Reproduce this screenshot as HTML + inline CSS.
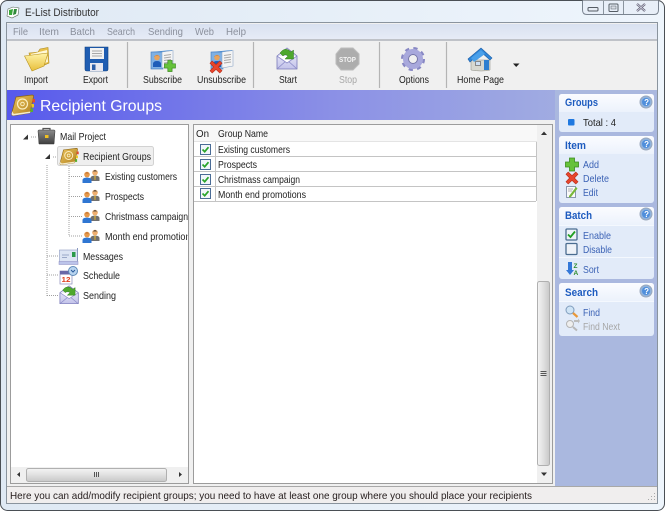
<!DOCTYPE html>
<html><head><meta charset="utf-8"><title>E-List Distributor</title>
<style>
html,body{margin:0;padding:0;width:665px;height:511px;overflow:hidden;background:#fff}
svg{display:block}
text{font-family:"Liberation Sans",sans-serif;font-size:10.5px;fill:#222}
.m{fill:#8b909c}
.b{fill:#3b62b5}
.h{font-weight:bold;font-size:11px;fill:#1d5bbf}
.g{fill:#a6a6a6}
</style></head><body>
<svg width="665" height="511" viewBox="0 0 665 511" xmlns="http://www.w3.org/2000/svg">
<defs>
<linearGradient id="glass" x1="0" y1="0" x2="1" y2="0"><stop offset="0" stop-color="#dfe9f4"/><stop offset="1" stop-color="#eef5fc"/></linearGradient>
<linearGradient id="menu" x1="0" y1="0" x2="0" y2="1"><stop offset="0" stop-color="#d9e1f0"/><stop offset="1" stop-color="#e6ebf6"/></linearGradient>
<linearGradient id="banner" x1="0" y1="0" x2="1" y2="0"><stop offset="0" stop-color="#5759ec"/><stop offset=".5" stop-color="#8b90e6"/><stop offset="1" stop-color="#aab8df"/></linearGradient>
<linearGradient id="ph" x1="0" y1="0" x2="0" y2="1"><stop offset="0" stop-color="#fbfcff"/><stop offset="1" stop-color="#ecf2fc"/></linearGradient>
<linearGradient id="sbv" x1="0" y1="0" x2="1" y2="0"><stop offset="0" stop-color="#f4f4f4"/><stop offset=".5" stop-color="#e0e0e0"/><stop offset="1" stop-color="#c8c8c8"/></linearGradient>
<linearGradient id="sbh" x1="0" y1="0" x2="0" y2="1"><stop offset="0" stop-color="#f4f4f4"/><stop offset=".5" stop-color="#e0e0e0"/><stop offset="1" stop-color="#c8c8c8"/></linearGradient>
<linearGradient id="fold" x1="0" y1="0" x2="0" y2="1"><stop offset="0" stop-color="#fff3a8"/><stop offset="1" stop-color="#e8bf3a"/></linearGradient>
<linearGradient id="book" x1="0" y1="0" x2="1" y2="1"><stop offset="0" stop-color="#ecc45c"/><stop offset="1" stop-color="#b08020"/></linearGradient>
<linearGradient id="env" x1="0" y1="0" x2="0" y2="1"><stop offset="0" stop-color="#f4f4fc"/><stop offset="1" stop-color="#c2c2ea"/></linearGradient>
<linearGradient id="brief" x1="0" y1="0" x2="0" y2="1"><stop offset="0" stop-color="#8c8c8c"/><stop offset="1" stop-color="#3f3f3f"/></linearGradient>

<g id="person1"><circle cx="5" cy="3.600" r="2.800" fill="#e89a4a"/><path d="M2.200 3.200Q5 -.4 7.800 3.200L7 2.400H3Z" fill="#b0602a"/><path d="M.5 12V8.800Q1 6.600 5 6.600T9.500 8.800V12Z" fill="#2f76d2"/></g>
<g id="person2"><circle cx="5" cy="3.600" r="2.800" fill="#f0b070"/><path d="M2 3.500Q5 -1 8 3.500L7 2.400H3Z" fill="#333"/><path d="M.5 12V8.800Q1 6.600 5 6.600T9.500 8.800V12Z" fill="#707070"/><path d="M4.300 6.800H5.700L5.400 11H4.600Z" fill="#e0b030"/></g>
<g id="people"><use href="#person2" x="8" y="2"/><use href="#person1" x="0" y="4"/></g>

<g id="book-i">
<path d="M5 3 21 1Q23 1 22.500 3L19 19 3 21.500Q0 22 .8 19Z" fill="url(#book)" stroke="#8a6414" stroke-width=".7"/>
<path d="M.8 19Q0 22 3 21.500L19 19 19.500 17.500 3.500 19.800Q1.800 20 1.500 17Z" fill="#f6eccc"/>
<circle cx="11.500" cy="10" r="5" fill="none" stroke="#fbeec0" stroke-width="1.200"/>
<circle cx="11.500" cy="10" r="1.800" fill="none" stroke="#fbeec0"/>
<rect x="21.500" y="5" width="2.500" height="3.500" fill="#e14b2e"/><rect x="20.500" y="10" width="2.500" height="3.500" fill="#e8c820"/><rect x="19.500" y="14.500" width="2.500" height="3.500" fill="#58b030"/>
</g>

<g id="env-i">
<path d="M1 9 11 1 21 9V22H1Z" fill="url(#env)" stroke="#7a7ab8" stroke-width=".8"/>
<path d="M1 22 11 13 21 22" fill="none" stroke="#8c8cc8" stroke-width=".8"/>
<path d="M1 9 11 16 21 9" fill="#fff" stroke="#8c8cc8" stroke-width=".8"/>
<path d="M4 6Q9 -1 15 5L17.500 3V12H9L12 9Q9 6.500 7 9Z" fill="#4ea82e" stroke="#2f7a1c" stroke-width=".5"/>
</g>

<g id="card">
<path d="M1 3 22 1V4H1Z" fill="#4a90d8"/>
<rect x="1" y="3" width="12" height="17" fill="#7eb0e4" stroke="#3f78bb" stroke-width=".6"/>
<path d="M12 3 23 1.500V17L12 19Z" fill="#f4f4f4" stroke="#8fa8c8" stroke-width=".6"/>
<path d="M14 6.500 21 5.500M14 9 21 8M14 11.500 21 10.500M14 14 21 13" stroke="#a8a8a8" stroke-width="1"/>
<circle cx="7" cy="8.500" r="2.800" fill="#e8a35c"/>
<path d="M4.200 8Q7 4.500 9.800 8L9 6.800H5Z" fill="#a85d28"/>
<path d="M3 18V14.500Q3.500 12 7 12T11 14.500V18Z" fill="#1e5db8"/>
</g>

<g id="plus"><path d="M4.500 .5H9.500V4.500H13.500V9.500H9.500V13.500H4.500V9.500H.5V4.500H4.500Z" fill="#66c23a" stroke="#3a8a1e" stroke-width=".8"/></g>
<g id="cross"><path d="M1 3.200 3.200 1 7 4.600 10.800 1 13 3.200 9.400 7 13 10.800 10.800 13 7 9.400 3.200 13 1 10.800 4.600 7Z" fill="#e8452c" stroke="#b42c18" stroke-width=".6"/></g>
<g id="help"><circle r="6" fill="#8fb2dc" stroke="#9aa8bc"/><circle r="4" fill="#4f8fdc"/><text x="-1.900" y="3" style="font-size:8px;font-weight:bold;fill:#fff">?</text></g>
<g id="cb"><rect x=".5" y=".5" width="10" height="10" fill="#f2f6fb" stroke="#4a6c96"/><path d="M2.500 5.500 4.700 7.700 8.500 3.200" fill="none" stroke="#2aa52a" stroke-width="1.700"/></g>
<g id="exp"><path d="M0 5 5 0V5Z" fill="#333"/></g>
</defs>

<!-- window frame -->
<rect x=".5" y=".5" width="664" height="510" rx="7" fill="url(#glass)" stroke="#4a4f55"/>
<rect x="6.500" y="22.500" width="651" height="481" fill="#f0f0f0" stroke="#8a949e"/>

<!-- title -->
<path d="M8 9 13 7 19 8 18 15 12 18 7 16Z" fill="#fff" stroke="#5a6a5a" stroke-width=".6"/>
<path d="M9 10 13 9 12 15 9 15Z" fill="#38a838"/><path d="M14 9 17 9 16 14 13 15Z" fill="#2f8a3a"/>
<text x="25" y="16" textLength="74" lengthAdjust="spacingAndGlyphs" style="font-size:11px;fill:#333">E-List Distributor</text>

<!-- caption buttons -->
<path d="M582.500 .5V10Q582.500 14.500 587 14.500H654Q658.500 14.500 658.500 10V.5" fill="#e8eff8" stroke="#7a8490"/>
<path d="M603.500 1V14M623.500 1V14" stroke="#8a949e"/>
<rect x="588" y="7.500" width="10" height="3.500" rx="1" fill="#e6ecf4" stroke="#555c64"/>
<rect x="609" y="4" width="9" height="7.500" rx="1" fill="none" stroke="#555c64"/><rect x="611" y="6" width="5" height="3" fill="#d6dce4" stroke="#555c64" stroke-width=".5"/>
<path d="M637 4 645 11M645 4 637 11" stroke="#667" stroke-width="2.200"/><path d="M637 4 645 11M645 4 637 11" stroke="#dde" stroke-width=".8"/>

<!-- menu -->
<rect x="7" y="24" width="650" height="15" fill="url(#menu)"/>
<rect x="7" y="39" width="650" height="2" fill="#bfc2c8"/>
<text class="m" x="13" y="35" textLength="15" lengthAdjust="spacingAndGlyphs">File</text>
<text class="m" x="39" y="35" textLength="20" lengthAdjust="spacingAndGlyphs">Item</text>
<text class="m" x="70" y="35" textLength="25" lengthAdjust="spacingAndGlyphs">Batch</text>
<text class="m" x="107" y="35" textLength="28" lengthAdjust="spacingAndGlyphs">Search</text>
<text class="m" x="148" y="35" textLength="35" lengthAdjust="spacingAndGlyphs">Sending</text>
<text class="m" x="195" y="35" textLength="19" lengthAdjust="spacingAndGlyphs">Web</text>
<text class="m" x="226" y="35" textLength="20" lengthAdjust="spacingAndGlyphs">Help</text>

<!-- toolbar -->
<rect x="7" y="41" width="650" height="49" fill="#f0f0f0"/>
<path d="M127.500 42V88M253.500 42V88M379.500 42V88M446.500 42V88" stroke="#b4b4b4" stroke-width="1.200"/>
<text x="24" y="83" textLength="24" lengthAdjust="spacingAndGlyphs">Import</text>
<text x="83" y="83" textLength="25" lengthAdjust="spacingAndGlyphs">Export</text>
<text x="143" y="83" textLength="39" lengthAdjust="spacingAndGlyphs">Subscribe</text>
<text x="197" y="83" textLength="49" lengthAdjust="spacingAndGlyphs">Unsubscribe</text>
<text x="279" y="83" textLength="18" lengthAdjust="spacingAndGlyphs">Start</text>
<text x="339" y="83" textLength="18" lengthAdjust="spacingAndGlyphs" class="g">Stop</text>
<text x="399" y="83" textLength="30" lengthAdjust="spacingAndGlyphs">Options</text>
<text x="457" y="83" textLength="47" lengthAdjust="spacingAndGlyphs">Home Page</text>
<path d="M513 63.500H519.500L516.200 67Z" fill="#222"/>

<!-- import folder -->
<g transform="translate(24,47)">
<path d="M5 6 14 5 16 2 24 .5 25 16 9 23Z" fill="#e8c04a" stroke="#b08d20" stroke-width=".6"/>
<path d="M7 7 23 3 24 15 9 20Z" fill="#fff8d8"/>
<path d="M.5 9 24 6 20 19 8 24Z" fill="url(#fold)" stroke="#b8921e" stroke-width=".6"/>
</g>
<!-- export floppy -->
<g transform="translate(84,47)">
<path d="M1 0H24V22Q24 24 22 24H3Q1 24 1 22Z" fill="#1f5db2" stroke="#10407e" stroke-width=".6"/>
<rect x="6" y="1" width="14" height="11" fill="#f2f2f2"/>
<path d="M8 4H18M8 6.500H18M8 9H18" stroke="#a8a8a8"/>
<rect x="6" y="16" width="13" height="8" fill="#e8e8f0"/><rect x="8" y="17.500" width="3.500" height="5.500" fill="#2a5da8"/>
</g>
<!-- subscribe -->
<use href="#card" x="150" y="49"/>
<use href="#plus" transform="translate(164,60) scale(.85)"/>
<!-- unsubscribe -->
<use href="#card" x="210" y="49"/>
<use href="#cross" x="209" y="60"/>
<!-- start -->
<use href="#env-i" transform="translate(276,47)"/>
<!-- stop -->
<path d="M341 48H353L359 54V64L353 70H341L336 64V54Z" fill="#adadad" stroke="#bdbdbd"/>
<text x="339" y="62" textLength="17" lengthAdjust="spacingAndGlyphs" style="font-size:7.500px;font-weight:bold;fill:#f4f4f4">STOP</text>
<!-- options gear -->
<g transform="translate(413,59)">
<circle r="9.800" fill="none" stroke="#8888c4" stroke-width="4.500" stroke-dasharray="3.850 3.850"/>
<circle r="7.500" fill="none" stroke="#a8a8dc" stroke-width="5"/>
<circle r="4.500" fill="#f0f0f0" stroke="#7070a8"/>
</g>
<!-- home -->
<g transform="translate(468,47)">
<path d="M3 13H22V23Q14 25 3 23Z" fill="#d8d8d0" stroke="#8a8a80" stroke-width=".5"/>
<path d="M0 12 13 1 24 11 22 13 13 5 2 15Z" fill="#2f86d8" stroke="#1c5ea8" stroke-width=".6"/>
<path d="M3 11 13 3 17 7 6 15Z" fill="#4aa0ea"/>
<rect x="16" y="13" width="5" height="10" fill="#2e7fd0"/>
<rect x="7" y="14" width="6" height="5" fill="#888"/><rect x="8" y="15" width="4" height="3" fill="#cfe0f4"/>
</g>

<!-- banner -->
<rect x="7" y="90" width="650" height="30" fill="url(#banner)"/>
<use href="#book-i" transform="translate(11,94)"/>
<text x="40" y="111" textLength="122" lengthAdjust="spacingAndGlyphs" style="font-size:16px;fill:#fff">Recipient Groups</text>

<!-- sidebar -->
<rect x="555" y="90" width="102" height="397" fill="#aab8df"/>

<!-- tree panel -->
<rect x="10.500" y="124.500" width="178" height="359" fill="#fff" stroke="#9c9c9c"/>
<path d="M31 137H37M53 157H58M47 165V296M47 256H58M47 275H58M47 295.500H58M69 166V236M69 176.500H82M69 196.500H82M69 216.500H82M69 236H82M46 136V138" stroke="#a0a0a0" stroke-dasharray="1 1" fill="none"/>
<use href="#exp" x="23" y="134.500"/>
<use href="#exp" x="45" y="154"/>
<!-- briefcase -->
<g transform="translate(37,127)">
<path d="M6 3.500V1.500H13V3.500" fill="none" stroke="#555" stroke-width="1.200"/>
<path d="M1 4Q1 3 2 3H17Q18 3 18 4L17 17H2Z" fill="url(#brief)" stroke="#333" stroke-width=".5"/>
<rect x="8" y="8" width="3.500" height="3" fill="#f0c020"/>
</g>
<!-- selection -->
<rect x="57.500" y="146.500" width="96" height="19" rx="2" fill="#efefef" stroke="#d2d2d2"/>
<use href="#book-i" transform="translate(59.500,147.500) scale(.8)"/>
<text x="60" y="140" textLength="46" lengthAdjust="spacingAndGlyphs">Mail Project</text>
<text x="83" y="160" textLength="68" lengthAdjust="spacingAndGlyphs">Recipient Groups</text>
<use href="#people" x="82" y="167"/>
<use href="#people" x="82" y="187"/>
<use href="#people" x="82" y="207"/>
<use href="#people" x="82" y="227"/>
<text x="105" y="180" textLength="72" lengthAdjust="spacingAndGlyphs">Existing customers</text>
<text x="105" y="200" textLength="39" lengthAdjust="spacingAndGlyphs">Prospects</text>
<svg x="100" y="205" width="87.500" height="40" viewBox="100 205 87.500 40" overflow="hidden">
<text x="105" y="220" textLength="83" lengthAdjust="spacingAndGlyphs">Christmass campaign</text>
<text x="105" y="240" textLength="90" lengthAdjust="spacingAndGlyphs">Month end promotions</text>
</svg>
<!-- messages -->
<g transform="translate(59,247)">
<rect x=".5" y="3" width="18" height="12" fill="#dce4f4" stroke="#8a98c0" stroke-width=".6"/>
<rect x="13" y="5" width="3.500" height="5" fill="#2a9a4a"/>
<path d="M3 8H10M3 10.500H8" stroke="#9aa8c8"/>
<path d="M18.500 1V14" stroke="#8a98c0"/>
<rect x="0" y="14.500" width="19" height="3" fill="#bcc4ea" stroke="#8a8ac0" stroke-width=".5"/>
</g>
<text x="83" y="260" textLength="40" lengthAdjust="spacingAndGlyphs">Messages</text>
<!-- schedule -->
<g transform="translate(59,266)">
<rect x="1" y="5" width="12" height="13" fill="#fff" stroke="#8888b8" stroke-width=".7"/>
<rect x="1" y="5" width="12" height="3.500" fill="#6868a8"/>
<text x="2.500" y="16" textLength="9" lengthAdjust="spacingAndGlyphs" style="font-size:7.500px;font-weight:bold;fill:#e04020">12</text>
<circle cx="14" cy="5" r="4.500" fill="#b8d4f0" stroke="#5f8ab8"/>
<path d="M12 4 14 6 16 4" fill="none" stroke="#2a5a9a"/>
</g>
<text x="83" y="279" textLength="37" lengthAdjust="spacingAndGlyphs">Schedule</text>
<!-- sending -->
<use href="#env-i" transform="translate(59,285) scale(.92,.85)"/>
<text x="83" y="299" textLength="33" lengthAdjust="spacingAndGlyphs">Sending</text>
<!-- tree h scrollbar -->
<rect x="11" y="467" width="177" height="16" fill="#f0f0f0"/>
<path d="M20 472V477L17 474.500ZM179 472V477L182 474.500Z" fill="#333"/>
<rect x="26.500" y="468.500" width="140" height="13" rx="2" fill="url(#sbh)" stroke="#b0b0b0"/>
<path d="M94.500 472V477M96.500 472V477M98.500 472V477" stroke="#555"/>

<!-- list panel -->
<rect x="193.500" y="124.500" width="359" height="359" fill="#fff" stroke="#9c9c9c"/>
<rect x="194" y="125" width="343" height="16" fill="#f8f8f8"/>
<path d="M194 141.500H537" stroke="#e4e4e4"/>
<text x="196" y="137" textLength="13" lengthAdjust="spacingAndGlyphs">On</text>
<text x="218" y="137" textLength="50" lengthAdjust="spacingAndGlyphs">Group Name</text>
<path d="M194 156.500H536M194 171.500H536M194 186.500H536M194 201.500H536M215.500 142V201M536.500 142V201" stroke="#c4c4c4"/>
<use href="#cb" x="200" y="144"/>
<use href="#cb" x="200" y="159"/>
<use href="#cb" x="200" y="174"/>
<use href="#cb" x="200" y="188"/>
<text x="218" y="153" textLength="72" lengthAdjust="spacingAndGlyphs">Existing customers</text>
<text x="218" y="168" textLength="39" lengthAdjust="spacingAndGlyphs">Prospects</text>
<text x="218" y="183" textLength="82" lengthAdjust="spacingAndGlyphs">Christmass campaign</text>
<text x="218" y="198" textLength="88" lengthAdjust="spacingAndGlyphs">Month end promotions</text>
<!-- v scrollbar -->
<rect x="537" y="125" width="15" height="358" fill="#f0f0f0"/>
<path d="M541 135H547L544 131.500ZM541 472.500H547L544 476Z" fill="#333"/>
<rect x="537.500" y="281.500" width="12" height="184" rx="2" fill="url(#sbv)" stroke="#b0b0b0"/>
<path d="M540.500 371.500H546.500M540.500 373.500H546.500M540.500 375.500H546.500" stroke="#555"/>

<!-- groups panel -->
<rect x="559" y="94" width="95" height="38" rx="3" fill="#e2ebf9"/>
<path d="M559 112V97Q559 94 562 94H651Q654 94 654 97V112Z" fill="url(#ph)"/>
<text class="h" x="565" y="106" textLength="33" lengthAdjust="spacingAndGlyphs">Groups</text>
<use href="#help" x="646" y="102"/>
<rect x="568" y="119" width="6.500" height="6.500" rx="1" fill="#1f78e0"/>
<text x="583" y="126" textLength="33" lengthAdjust="spacingAndGlyphs">Total : 4</text>

<!-- item panel -->
<rect x="559" y="136" width="95" height="67" rx="3" fill="#e2ebf9"/>
<path d="M559 154V139Q559 136 562 136H651Q654 136 654 139V154Z" fill="url(#ph)"/>
<text class="h" x="565" y="149" textLength="21" lengthAdjust="spacingAndGlyphs">Item</text>
<use href="#help" x="646" y="144"/>
<use href="#plus" transform="translate(565,157.500)"/>
<use href="#cross" transform="translate(565,171)"/>
<g transform="translate(566,186)">
<rect x=".5" y=".5" width="9" height="11" fill="#fafafa" stroke="#8a98b0"/>
<path d="M2 3H7M2 5H6" stroke="#b0b0b0"/>
<path d="M3 10 10 1 11.500 2.500 5 11 3 11.500Z" fill="#78b83a"/>
</g>
<text class="b" x="583" y="168" textLength="16" lengthAdjust="spacingAndGlyphs">Add</text>
<text class="b" x="583" y="182" textLength="26" lengthAdjust="spacingAndGlyphs">Delete</text>
<text class="b" x="583" y="196" textLength="15" lengthAdjust="spacingAndGlyphs">Edit</text>

<!-- batch panel -->
<rect x="559" y="207" width="95" height="72" rx="3" fill="#e2ebf9"/>
<path d="M559 225V210Q559 207 562 207H651Q654 207 654 210V225Z" fill="url(#ph)"/>
<path d="M559 257.500H654" stroke="#f4f8fe"/>
<path d="M559 225.500H654" stroke="#f4f8fe"/>
<text class="h" x="565" y="219" textLength="27" lengthAdjust="spacingAndGlyphs">Batch</text>
<use href="#help" x="646" y="214"/>
<g fill="none" stroke="#4a6c90" stroke-width="1.300">
<rect x="566" y="229" width="11" height="11" rx="1" fill="#eef2f8"/>
<rect x="566" y="243.500" width="11" height="11" rx="1" fill="#eef2f8"/>
</g>
<path d="M568 234.500 570.500 237 575 231.500" fill="none" stroke="#22a022" stroke-width="1.800"/>
<path d="M568 262V270H566L570 275 574 270H572V262Z" fill="#3478d8"/>
<text x="573.500" y="268" style="font-size:6.500px;font-weight:bold;fill:#2a8a2a">Z</text>
<text x="573.500" y="275" style="font-size:6.500px;font-weight:bold;fill:#2a8a2a">A</text>
<text class="b" x="583" y="239" textLength="28" lengthAdjust="spacingAndGlyphs">Enable</text>
<text class="b" x="583" y="253" textLength="29" lengthAdjust="spacingAndGlyphs">Disable</text>
<text class="b" x="583" y="273" textLength="16" lengthAdjust="spacingAndGlyphs">Sort</text>

<!-- search panel -->
<rect x="559" y="283" width="95" height="53" rx="3" fill="#e2ebf9"/>
<path d="M559 301V286Q559 283 562 283H651Q654 283 654 286V301Z" fill="url(#ph)"/>
<path d="M559 301.500H654" stroke="#f4f8fe"/>
<text class="h" x="565" y="296" textLength="33" lengthAdjust="spacingAndGlyphs">Search</text>
<use href="#help" x="646" y="291"/>
<circle cx="570" cy="310" r="4" fill="#cfe4f6" stroke="#7f9cbc"/>
<path d="M573 313 577.500 317" stroke="#e8983a" stroke-width="2.200"/>
<circle cx="570" cy="324" r="3.500" fill="#eee" stroke="#b4b4b4"/>
<path d="M573 327 577 330.500" stroke="#b8b8b8" stroke-width="2"/>
<path d="M574 320H578V318.500L580 321 578 323.500V322H574Z" fill="#bcbcbc"/>
<text class="b" x="583" y="316" textLength="17" lengthAdjust="spacingAndGlyphs">Find</text>
<text class="g" x="583" y="330" textLength="37" lengthAdjust="spacingAndGlyphs">Find Next</text>

<!-- status -->
<rect x="7" y="487" width="650" height="16" fill="#f0eeee"/>
<path d="M7 486.500H657" stroke="#a8a8a8"/>
<text x="10" y="499" textLength="522" lengthAdjust="spacingAndGlyphs" style="font-size:10.500px;fill:#241c1c">Here you can add/modify recipient groups; you need to have at least one group where you should place your recipients</text>
<path d="M654 493h1v1h-1zM651 496h1v1h-1zM654 496h1v1h-1zM648 499h1v1h-1zM651 499h1v1h-1zM654 499h1v1h-1z" fill="#a8a8a8"/>
</svg>
</body></html>
